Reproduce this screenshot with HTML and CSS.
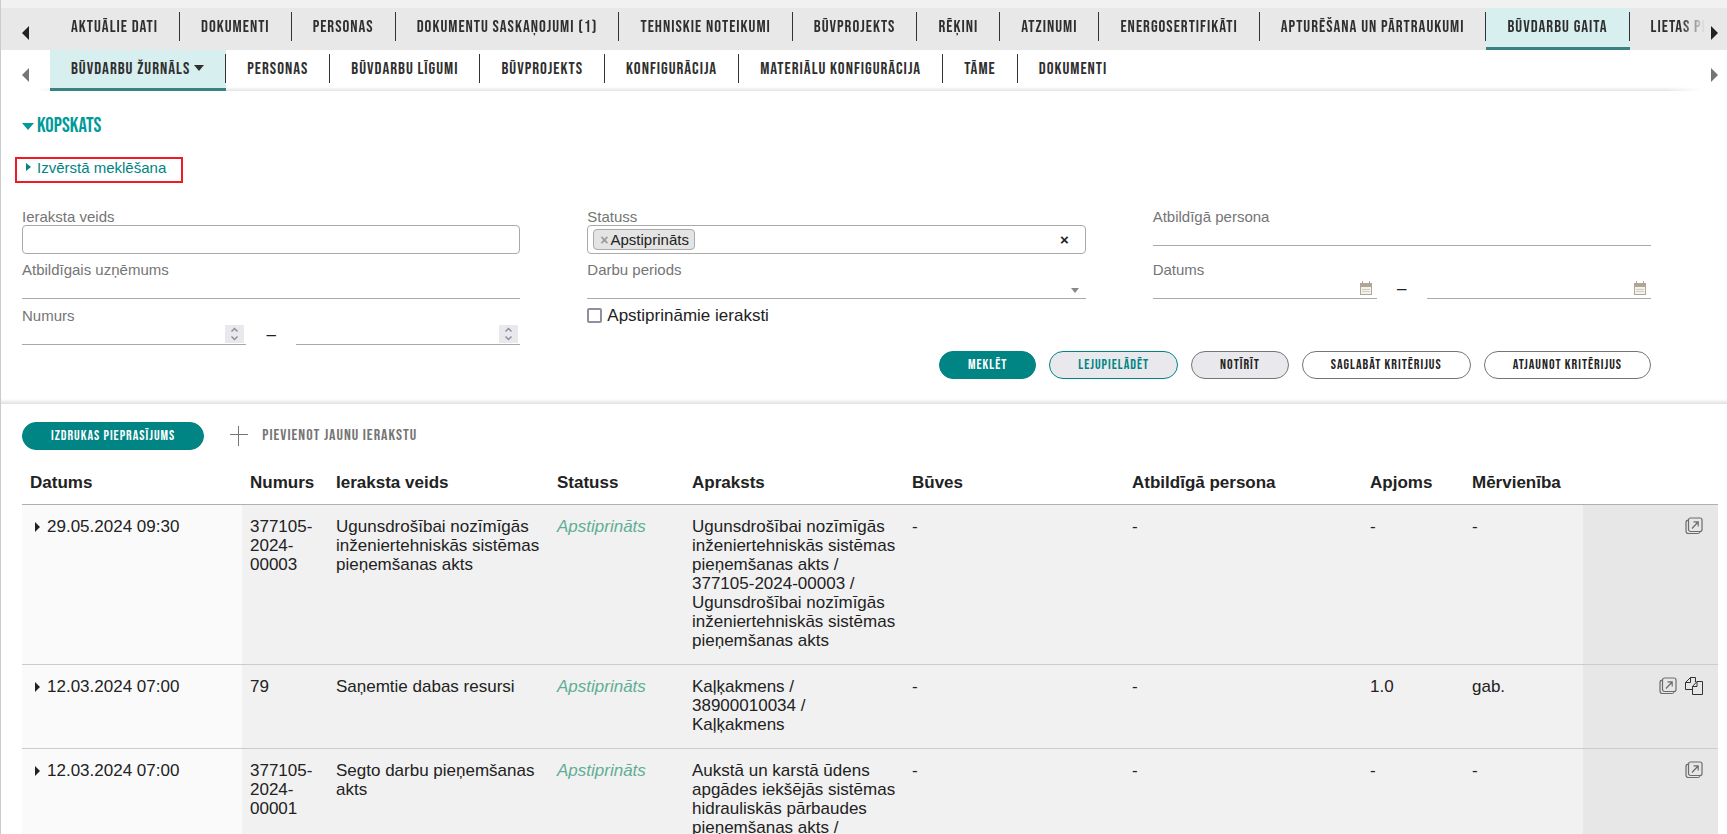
FILE: index.html
```html
<!DOCTYPE html>
<html lang="lv">
<head>
<meta charset="utf-8">
<title>Būvdarbu žurnāls</title>
<link rel="stylesheet" href="styles.css">
</head>
<body>
<svg class="sprite" aria-hidden="true">
  <symbol id="open" viewBox="0 0 18 18">
    <rect x="3.5" y="1" width="13.500" height="13.500" rx="2"/>
    <path d="M3.500 3.200C1.500 3.300 1 4 1 5.500V14c0 1.700.9 2.500 2.500 2.500H13c1.200 0 2-.5 2.300-2M7 11.500l6-6.500M8.500 4.800h4.700v4.700"/>
  </symbol>
  <symbol id="copy" viewBox="0 0 18 18">
    <path d="M7.500 12.500H.5V5.500L5.500.5H10.500v4.500M5.500.5v5H.5M7.500 17.500V9.500L12 4.500h5.500v13zM12 4.500v5H7.500"/>
  </symbol>
  <symbol id="calendar" viewBox="0 0 12 14">
    <path class="cal-frame" d="M0 2h12v12H0z"/>
    <path class="cal-page" d="M1 6h10v7H1z"/>
    <path class="cal-frame" d="M2 0h1v3H2zM9 0h1v3H9z"/>
    <path class="cal-dots" d="M2.500 8.500h7M2.500 10.500h7"/>
  </symbol>
</svg>

<nav class="strip strip--primary" aria-label="Lieta">
  <button class="scroll scroll--prev" aria-label="Iepriekšējie"></button>
  <div class="tabs tabs--primary">
    <a class="tab" href="#">AKTUĀLIE DATI</a>
    <a class="tab" href="#">DOKUMENTI</a>
    <a class="tab" href="#">PERSONAS</a>
    <a class="tab" href="#">DOKUMENTU SASKAŅOJUMI (1)</a>
    <a class="tab" href="#">TEHNISKIE NOTEIKUMI</a>
    <a class="tab" href="#">BŪVPROJEKTS</a>
    <a class="tab" href="#">RĒĶINI</a>
    <a class="tab" href="#">ATZINUMI</a>
    <a class="tab" href="#">ENERGOSERTIFIKĀTI</a>
    <a class="tab" href="#">APTURĒŠANA UN PĀRTRAUKUMI</a>
    <a class="tab tab--active" href="#" aria-current="page">BŪVDARBU GAITA</a>
    <a class="tab tab--last" href="#">LIETAS PI</a>
  </div>
  <button class="scroll scroll--next" aria-label="Nākamie"></button>
</nav>
<nav class="strip strip--secondary" aria-label="Būvdarbu gaita">
  <button class="scroll scroll--prev" aria-label="Iepriekšējie"></button>
  <div class="tabs">
    <a class="tab tab--active" href="#" aria-current="page">BŪVDARBU ŽURNĀLS<span class="caret"></span></a>
    <a class="tab" href="#">PERSONAS</a>
    <a class="tab" href="#">BŪVDARBU LĪGUMI</a>
    <a class="tab" href="#">BŪVPROJEKTS</a>
    <a class="tab" href="#">KONFIGURĀCIJA</a>
    <a class="tab" href="#">MATERIĀLU KONFIGURĀCIJA</a>
    <a class="tab" href="#">TĀME</a>
    <a class="tab tab--last" href="#">DOKUMENTI</a>
  </div>
  <button class="scroll scroll--next" aria-label="Nākamie"></button>
</nav>

<section class="search">
  <h1 class="title"><span class="title-caret"></span>KOPSKATS</h1>
  <a class="advanced" href="#">Izvērstā meklēšana</a>
  <form class="filters">
    <div class="column">
      <div class="field field--tall">
        <label for="type">Ieraksta veids</label>
        <input class="box" id="type" type="text">
      </div>
      <div class="field">
        <label for="company">Atbildīgais uzņēmums</label>
        <input class="line" id="company" type="text">
      </div>
      <div class="field">
        <label for="from">Numurs</label>
        <div class="range">
          <span class="slot"><input class="line" id="from" type="text" inputmode="numeric"><span class="spin"><svg viewBox="0 0 19 18"><path d="M6.500 6.500l3-3 3 3M6.500 11.500l3 3 3-3"/></svg></span></span>
          <span class="dash">–</span>
          <span class="slot"><input class="line" type="text" inputmode="numeric" aria-label="Numurs līdz"><span class="spin"><svg viewBox="0 0 19 18"><path d="M6.500 6.500l3-3 3 3M6.500 11.500l3 3 3-3"/></svg></span></span>
        </div>
      </div>
    </div>
    <div class="column">
      <div class="field field--tall">
        <label for="status">Statuss</label>
        <div class="box multi">
          <span class="chip"><button type="button" class="chip-remove" aria-label="Noņemt">×</button>Apstiprināts</span>
          <input class="multi-input" id="status" type="text">
          <button type="button" class="clear" aria-label="Notīrīt statusu">×</button>
        </div>
      </div>
      <div class="field">
        <label for="period">Darbu periods</label>
        <div class="slot"><select class="line" id="period"><option></option></select><span class="select-caret"></span></div>
      </div>
      <label class="check"><input type="checkbox">Apstiprināmie ieraksti</label>
    </div>
    <div class="column">
      <div class="field field--tall">
        <label for="person">Atbildīgā persona</label>
        <input class="line" id="person" type="text">
      </div>
      <div class="field">
        <label for="date">Datums</label>
        <div class="range">
          <span class="slot"><input class="line" id="date" type="text"><svg class="calendar"><use href="#calendar"/></svg></span>
          <span class="dash">–</span>
          <span class="slot"><input class="line" type="text" aria-label="Datums līdz"><svg class="calendar"><use href="#calendar"/></svg></span>
        </div>
      </div>
    </div>
    <div class="actions">
      <button type="button" class="pill pill--solid">MEKLĒT</button>
      <button type="button" class="pill pill--teal">LEJUPIELĀDĒT</button>
      <button type="button" class="pill pill--grey">NOTĪRĪT</button>
      <button type="button" class="pill">SAGLABĀT KRITĒRIJUS</button>
      <button type="button" class="pill">ATJAUNOT KRITĒRIJUS</button>
    </div>
  </form>
</section>

<section class="results">
  <div class="toolbar">
    <button type="button" class="pill pill--solid">IZDRUKAS PIEPRASĪJUMS</button>
    <a class="add" href="#"><svg viewBox="0 0 18 20"><path d="M0 8.500h18M8.500 0v20"/></svg>PIEVIENOT JAUNU IERAKSTU</a>
  </div>
  <table class="log">
    <colgroup><col class="c-date"><col class="c-number"><col class="c-type"><col class="c-status"><col class="c-text"><col class="c-text"><col class="c-person"><col class="c-amount"><col class="c-unit"><col></colgroup>
    <thead>
      <tr><th>Datums</th><th>Numurs</th><th>Ieraksta veids</th><th>Statuss</th><th>Apraksts</th><th>Būves</th><th>Atbildīgā persona</th><th>Apjoms</th><th>Mērvienība</th><th></th></tr>
    </thead>
    <tbody>
      <tr>
        <td class="date">29.05.2024 09:30</td><td>377105-2024-00003</td><td>Ugunsdrošībai nozīmīgās inženiertehniskās sistēmas pieņemšanas akts</td><td class="approved">Apstiprināts</td><td>Ugunsdrošībai nozīmīgās inženiertehniskās sistēmas pieņemšanas akts / 377105-2024-00003 / Ugunsdrošībai nozīmīgās inženiertehniskās sistēmas pieņemšanas akts</td><td>-</td><td>-</td><td>-</td><td>-</td>
        <td class="tools"><a href="#" aria-label="Atvērt"><svg class="icon icon--open"><use href="#open"/></svg></a></td>
      </tr>
      <tr>
        <td class="date">12.03.2024 07:00</td><td>79</td><td>Saņemtie dabas resursi</td><td class="approved">Apstiprināts</td><td>Kaļķakmens / 38900010034 / Kaļķakmens</td><td>-</td><td>-</td><td>1.0</td><td>gab.</td>
        <td class="tools"><a href="#" aria-label="Atvērt"><svg class="icon icon--open"><use href="#open"/></svg></a><a href="#" aria-label="Kopēt"><svg class="icon icon--copy"><use href="#copy"/></svg></a></td>
      </tr>
      <tr>
        <td class="date">12.03.2024 07:00</td><td>377105-2024-00001</td><td>Segto darbu pieņemšanas akts</td><td class="approved">Apstiprināts</td><td>Aukstā un karstā ūdens apgādes iekšējās sistēmas hidrauliskās pārbaudes pieņemšanas akts /</td><td>-</td><td>-</td><td>-</td><td>-</td>
        <td class="tools"><a href="#" aria-label="Atvērt"><svg class="icon icon--open"><use href="#open"/></svg></a></td>
      </tr>
    </tbody>
  </table>
</section>
</body>
</html>
```
FILE: styles.css
```css
:root {
  --teal: #008484;
  --ink: #222;
  --grey: #757575;
  --rule: #aaa;
  --display: "Bebas Neue", "Liberation Sans Narrow", "Arial Narrow", "Roboto Condensed", "Open Sans Condensed", sans-serif;
}
* { box-sizing: border-box; }
html { height: 100%; overflow: hidden; }
body {
  margin: 0;
  height: 100%;
  overflow: hidden;
  padding-top: 8px;
  border-left: 1px solid #ccc;
  background: linear-gradient(#f1f1f1 0 8px, #fff 8px);
  font: 17px/19px "Liberation Sans", Arial, sans-serif;
  color: var(--ink);
}
a { color: inherit; text-decoration: none; }
button, input, select { font: inherit; color: inherit; margin: 0; }
.sprite { display: none; }

/* Tab strips */
.strip { display: flex; }
.strip--primary { height: 42px; background: #e8e8e8; }
.strip--secondary {
  height: 41px;
  background: linear-gradient(to right, #fff 36px, transparent 60px calc(100% - 60px), #fff calc(100% - 24px)), linear-gradient(#fff 37px, #e4e4e4);
}
.scroll { display: flex; align-items: center; border: 0; padding: 8px 0 0; background: none; color: #222; flex: none; }
.strip--secondary .scroll { color: #757575; }
.scroll--prev { width: 49px; padding-left: 21px; }
.scroll--next { width: 22px; padding-left: 6px; }
.scroll::before { content: ""; border: 7px solid transparent; }
.scroll--prev::before { border-left-width: 0; border-right-color: currentColor; }
.scroll--next::before { border-right-width: 0; border-left-color: currentColor; }
.tabs { display: flex; flex: 1; min-width: 0; overflow: hidden; }
.tabs--primary { mask-image: linear-gradient(to left, transparent, #000 24px); }
.tab {
  display: flex;
  align-items: flex-start;
  flex: none;
  padding: 4px 22px 0 21px;
  font: 17px/31px var(--display);
  letter-spacing: 1px;
  color: #2f2f2f;
  white-space: nowrap;
  background: linear-gradient(#333, #333) right 4px / 1px 29px no-repeat;
}
.tab--active { background-color: #d8efef; border-bottom: 3px solid #3a8282; }
.tab--last { background: none; }
.caret { margin: 11px 0 0 4px; border: 5px solid transparent; border-top: 6px solid; border-bottom: 0; }

/* Search panel */
.search { padding: 24px 76px 25px 21px; background: linear-gradient(to top, #e0e0e0, #fff 5px); }
.title { display: flex; align-items: center; gap: 3px; margin: 0; font: 21px/22px var(--display); color: #009a9a; }
.title-caret { border: 6px solid transparent; border-top: 7px solid; border-bottom: 0; }
.advanced {
  display: inline-flex;
  align-items: flex-start;
  gap: 6px;
  height: 26px;
  margin: 20px 0 0 -7px;
  padding: 0 15px 0 9px;
  border: 2px solid #ed1c24;
  font-size: 15px;
  line-height: 18px;
  color: var(--teal);
}
.advanced::before { content: ""; margin-top: 4px; border: 4px solid transparent; border-left: 5px solid; border-right: 0; }
.filters { display: grid; grid-template-columns: repeat(3, 1fr); column-gap: 67px; row-gap: 1px; margin-top: 22px; }
.field { height: 46px; }
.field--tall { height: 53px; }
.field label { display: block; padding-top: 3px; font-size: 15px; line-height: 17px; color: var(--grey); }
.box { display: flex; width: 100%; height: 29px; border: 1px solid var(--rule); border-radius: 4px; background: #fff; }
.line { display: block; width: 100%; height: 21px; border: 0; border-bottom: 1px solid var(--rule); background: none; padding: 0; border-radius: 0; }
select.line { appearance: none; }
.multi { align-items: center; padding: 0 16px 0 5px; font-size: 15px; }
.multi-input { flex: 1; min-width: 0; border: 0; outline: 0; background: none; }
.chip { display: flex; align-items: center; height: 21px; padding: 0 5px 0 4px; border: 1px solid #aaa; border-radius: 4px; background: #e4e4e4; }
.chip-remove { border: 0; padding: 0 2px; background: none; color: #999; font-weight: bold; font-size: 14px; line-height: 18px; }
.clear { border: 0; padding: 0; background: none; font-weight: bold; }
.slot { position: relative; display: block; flex: 1; }
.range { display: flex; }
.dash { width: 50px; text-align: center; line-height: 21px; }
.spin, .calendar, .select-caret { position: absolute; pointer-events: none; }
.spin { right: 2px; bottom: 2px; width: 19px; height: 18px; background: #e9e9ed; }
.spin svg { display: block; fill: none; stroke: #8f8f9d; stroke-width: 1.5; }
.calendar { right: 5px; bottom: 4px; width: 12px; height: 14px; }
.cal-frame { fill: #b0a698; }
.cal-page { fill: #f4f2ee; }
.cal-dots { stroke: #b0a698; stroke-dasharray: 1 1; }
.select-caret { right: 7px; bottom: 6px; border: 4px solid transparent; border-top: 5px solid #888; border-bottom: 0; }
.check { display: flex; align-items: center; gap: 5px; line-height: 23px; }
.check input { appearance: none; width: 15px; height: 15px; border: 2px solid #8f8f9d; border-radius: 2px; background: #fff; }
.actions { grid-column: 1 / -1; display: flex; flex-wrap: wrap; justify-content: flex-end; gap: 13px; }
.pill {
  height: 28px;
  padding: 0 28px;
  border: 1px solid var(--grey);
  border-radius: 14px;
  background: #fff;
  font: 14px/26px var(--display);
  letter-spacing: 1px;
}
.pill--solid { background: var(--teal); border-color: var(--teal); color: #fff; }
.pill--teal { background: #e9e9ed; border-color: var(--teal); color: var(--teal); }
.pill--grey { background: #e9e9ed; }

/* Results */
.results { padding: 18px 9px 0 21px; }
.toolbar { display: flex; align-items: center; gap: 26px; }
.add { display: flex; align-items: center; gap: 14px; font: 16px/20px var(--display); letter-spacing: 1px; color: var(--grey); }
.add svg { width: 18px; height: 20px; stroke: var(--grey); }
.log { width: 100%; margin-top: 13px; border-collapse: collapse; table-layout: fixed; }
.c-date, .c-text { width: 220px; }
.c-number { width: 86px; }
.c-type { width: 221px; }
.c-status { width: 135px; }
.c-person { width: 238px; }
.c-amount { width: 102px; }
.c-unit { width: 119px; }
.log th { padding: 10px 8px 12px; text-align: left; border-bottom: 1px solid #b0b0b0; }
.log td { padding: 12px 8px 14px; vertical-align: top; background: #f1f1f1; border-bottom: 1px solid #ccc; }
.log .date { padding-left: 13px; background: #fafafa; }
.date::before { content: ""; display: inline-block; margin-right: 7px; border: 5px solid transparent; border-left: 5px solid; border-right: 0; }
.log .approved { font-style: italic; color: #5fae93; }
.log .tools { padding: 12px 15px 0 8px; text-align: right; background: #e7e7e7; }
.tools a { margin-left: 8px; }
.icon { width: 18px; height: 18px; fill: none; }
.icon--open { stroke: #6c6c6c; stroke-width: 1.2; }
.icon--copy { stroke: #333; }
```
